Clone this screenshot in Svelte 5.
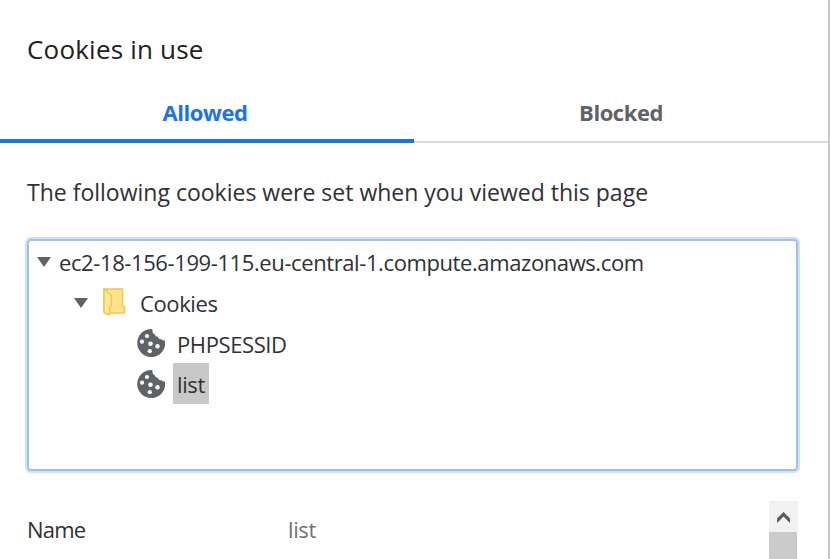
<script>
  const cookies = [
    { name: 'PHPSESSID', selected: false },
    { name: 'list', selected: true }
  ];
</script>

<main class="dialog">
  <h1><span class="heading">Cookies in use</span></h1>
  <div class="tabs">
    <div class="tab active"><span>Allowed</span></div>
    <div class="tab"><span>Blocked</span></div>
  </div>
  <p class="intro"><span>The following cookies were set when you viewed this page</span></p>

  <div class="tree">
    <div class="row host">
      <svg class="arrow" width="14" height="10" viewBox="0 0 14 10"><path d="M0 0H14L7 10Z" fill="#5f6368" /></svg>
      <span class="domain">ec2-18-156-199-115.eu-central-1.compute.amazonaws.com</span>
    </div>
    <div class="row folder-row">
      <svg class="arrow" width="14" height="10" viewBox="0 0 14 10"><path d="M0 0H14L7 10Z" fill="#5f6368" /></svg>
      <svg class="folder" width="23" height="28" viewBox="0 0 23 28">
        <path d="M1 1H19.5V17L21.5 18.5V25H7L1 22Z" fill="#ffe48c" stroke="#edc84b" stroke-width="1.5" stroke-linejoin="round" />
        <path d="M1 1L7.5 6.5Q8.5 8 8.5 10V17L6.5 20V26L5.5 27L1 24.5Z" fill="#ffe694" stroke="#edc84b" stroke-width="1.5" stroke-linejoin="round" />
      </svg>
      <span class="folder-name">Cookies</span>
    </div>
    {#each cookies as cookie}
      <div class="row cookie-row">
        <svg width="28" height="28" viewBox="0 0 28 28">
          <path d="M15.3 .1A14 14 0 1 0 28 11.5Q25.8 11.9 24.3 10.3Q21.6 10.7 20.8 7.7Q18.4 7.9 17.8 5.2Q15.2 4.5 15.3 .1Z" fill="#5f6368" />
          <g fill="#fff"><circle cx="10" cy="7" r="2.1" /><circle cx="5" cy="12.7" r="2.1" /><circle cx="13.5" cy="14.7" r="2.3" /><circle cx="20.5" cy="17.3" r="2.2" /><circle cx="12.8" cy="22.2" r="2.1" /></g>
        </svg>
        <span class="label" class:selected={cookie.selected}>{cookie.name}</span>
      </div>
    {/each}
  </div>

  <div class="details">
    <span class="key">Name</span>
    <span class="value">list</span>
    <div class="scrollbar">
      <div class="up"><svg width="13" height="11" viewBox="0 0 14 12"><path d="M0 7L7 0L14 7V12L7 5L0 12Z" fill="#5a5a5a" /></svg></div>
      <div class="thumb"></div>
    </div>
  </div>
</main>

<style>
  .dialog {
    box-sizing: border-box;
    width: 830px;
    height: 559px;
    overflow: hidden;
    border-right: 2px solid #c6c6c6;
    background: #fefefe;
    color: #303134;
    font: 22px/41px 'Open Sans', 'Noto Sans', sans-serif;
    white-space: nowrap;
  }
  h1 { margin: 0; height: 85px; padding: 29px 0 0 27px; box-sizing: border-box; font-size: 26px; line-height: 40px; font-weight: 400; letter-spacing: .2px; color: #202124; }
  .tabs { display: flex; height: 58px; box-sizing: border-box; border-bottom: 2px solid #dadce0; letter-spacing: -.45px; }
  .tab { width: 50%; height: 58px; box-sizing: border-box; padding-top: 7px; text-align: center; font-weight: 700; color: #5f6368; }
  .tab.active { padding-right: 4px; color: #1a73e8; border-bottom: 4px solid #1a73e8; }
  .intro { margin: 0; height: 96px; padding: 29px 0 0 27px; box-sizing: border-box; font-size: 23px; }
  .tree { width: 771px; height: 232px; margin-left: 27px; box-sizing: border-box; border: 2px solid #a0c0e9; border-radius: 4px; box-shadow: 0 0 0 2px #cfe1f8; letter-spacing: -.4px; }
  .row { display: flex; align-items: center; height: 41px; line-height: 41px; }
  .row svg { flex: none; }
  .host { padding-left: 8px; }
  .domain { margin-left: 8px; padding-top: 2px; }
  .folder-row { padding-left: 45px; }
  .folder { margin: -1px 0 0 15px; }
  .folder-name { margin-left: 14px; padding-top: 1px; }
  .cookie-row { height: 40.5px; padding-left: 108px; }
  .label { box-sizing: border-box; height: 41px; line-height: 42px; margin-left: 8px; padding: 0 4px; }
  .selected { line-height: 43px; background: #c8c8c8; }
  .details { display: flex; height: 88px; padding: 30px 0 0 27px; box-sizing: border-box; line-height: 56px; letter-spacing: -.4px; }
  .key { width: 261px; letter-spacing: -.8px; }
  .value { width: 481px; color: #6f7378; }
  .scrollbar { width: 29px; }
  .up { display: flex; justify-content: center; align-items: center; height: 31px; padding-top: 1px; box-sizing: border-box; background: #f1f1f1; }
  .thumb { width: 28px; height: 40px; background: #cacaca; }
</style>
